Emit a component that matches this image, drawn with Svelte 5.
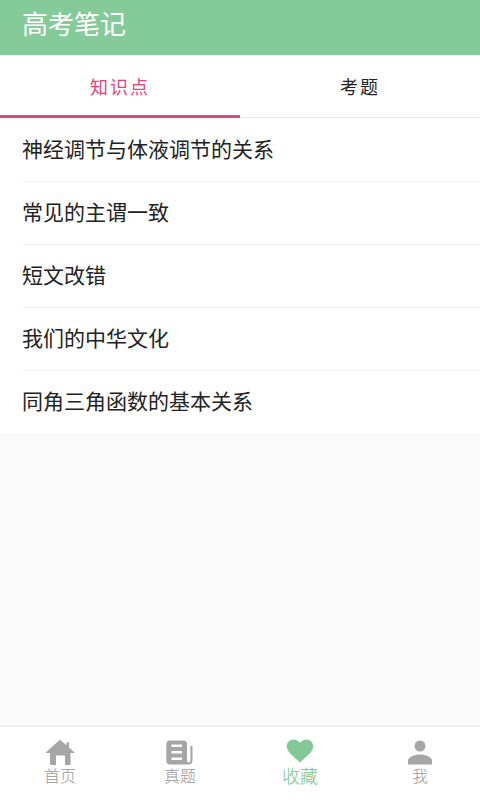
<script lang="ts">
	type Tab = { id: string; label: string; notes: string[] };

	const tabs: Tab[] = [
		{
			id: 'points',
			label: '知识点',
			notes: [
				'神经调节与体液调节的关系',
				'常见的主谓一致',
				'短文改错',
				'我们的中华文化',
				'同角三角函数的基本关系'
			]
		},
		{ id: 'questions', label: '考题', notes: [] }
	];

	const pages = [
		{ id: 'home', label: '首页' },
		{ id: 'papers', label: '真题' },
		{ id: 'favorites', label: '收藏' },
		{ id: 'me', label: '我' }
	];

	let activeTab = $state('points');
	let activePage = $state('favorites');

	let notes = $derived(tabs.find((tab) => tab.id === activeTab)?.notes ?? []);
</script>

<div class="app">
	<header class="header">
		<h1>高考笔记</h1>
	</header>

	<div class="tabs" role="tablist">
		{#each tabs as tab}
			<button
				class="tab"
				class:active={activeTab === tab.id}
				role="tab"
				aria-selected={activeTab === tab.id}
				onclick={() => (activeTab = tab.id)}
			>
				{tab.label}
			</button>
		{/each}
	</div>

	<main class="content">
		<ul class="notes">
			{#each notes as note}
				<li><a href="#note">{note}</a></li>
			{/each}
		</ul>
	</main>

	<nav class="bottom-nav">
		{#each pages as page}
			<button
				class="nav-item"
				class:active={activePage === page.id}
				onclick={() => (activePage = page.id)}
			>
				<svg viewBox="0 0 30 26" aria-hidden="true">
					{#if page.id === 'home'}
						<path
							d="M14.300 1.200Q15 .6 15.700 1.200L21.500 6.300V4Q21.500 3.200 22.500 3.200H23Q24 3.200 24 4V8.500L29.300 13.200V14H25.500V25Q25.500 26 24.500 26H20V16.500H11V26H6Q5 26 5 25V14H1V13.200Z"
						/>
					{:else if page.id === 'papers'}
						<path
							fill-rule="evenodd"
							d="M5 1.500H18.500Q22 1.500 22 5V21.500Q22 23.500 23.700 23.500T25.400 21.500V7H27.500V21.500Q27.500 25.500 23.500 25.500H5Q1.300 25.500 1.300 21.500V5.500Q1.300 1.500 5 1.500ZM6.500 5.500V8H17V5.500ZM6.500 12V14.500H17V12ZM6.500 18.500V21H17V18.500Z"
						/>
					{:else if page.id === 'favorites'}
						<path
							d="M15 23.500 13.500 22C6 15.500 1.800 12 1.800 7.300C1.800 3.300 4.800.5 8.600.5C11 .5 13.500 1.800 15 3.800C16.500 1.800 19 .5 21.400.5C25.200.5 28.200 3.300 28.200 7.300C28.200 12 24 15.500 16.500 22Z"
						/>
					{:else}
						<circle cx="15" cy="7" r="5.500" />
						<path d="M3 25.500V22C3 18 9 15.500 15 15.500S27 18 27 22V25.500Z" />
					{/if}
				</svg>
				<span>{page.label}</span>
			</button>
		{/each}
	</nav>
</div>

<style>
	:global(body) {
		margin: 0;
		background-color: #fafafa;
	}

	.app {
		min-height: 100vh;
		display: flex;
		flex-direction: column;
		font-family: 'Noto Sans CJK SC', sans-serif;
		color: #222;
	}

	button {
		padding: 0;
		border: none;
		background: none;
		font-family: inherit;
		cursor: pointer;
	}

	.header {
		padding: 5px 22px 14px;
		background-color: #85cb99;
		color: #fff;
	}

	h1 {
		margin: 0;
		font-size: 26px;
		font-weight: 400;
		line-height: 36px;
	}

	.tabs {
		display: flex;
		background-color: #fff;
		border-bottom: 1px solid #e6e6e6;
	}

	.tab {
		flex: 1;
		height: 63px;
		margin-bottom: -1px;
		padding-bottom: 2px;
		border-top: 3px solid transparent;
		border-bottom: 3px solid transparent;
		font-size: 18px;
		letter-spacing: 2px;
		color: #222;
	}

	.tab.active {
		border-bottom-color: #dc4a7d;
		color: #ec407a;
	}

	.content {
		flex: 1;
	}

	.notes {
		margin: 0;
		padding: 0 0 0 22px;
		list-style: none;
		background-color: #fff;
	}

	.notes li {
		border-top: 1px solid #f3f3f3;
	}

	.notes li:first-child {
		border-top-color: transparent;
	}

	.notes a {
		display: block;
		padding: 14px 22px 18px 0;
		font-size: 21px;
		line-height: 30px;
		color: inherit;
		text-decoration: none;
	}

	.bottom-nav {
		display: flex;
		background-color: #fff;
		border-top: 2px solid #f0f0f0;
	}

	.nav-item {
		flex: 1;
		display: flex;
		flex-direction: column;
		align-items: center;
		padding: 12px 0 14px;
		font-size: 16px;
		font-weight: 300;
		line-height: 21px;
		color: #999;
	}

	.nav-item svg {
		width: 30px;
		height: 26px;
		fill: #a6a6a6;
	}

	.nav-item.active {
		font-size: 18px;
		color: #78c48e;
	}

	.nav-item.active svg {
		fill: #82c995;
	}
</style>
